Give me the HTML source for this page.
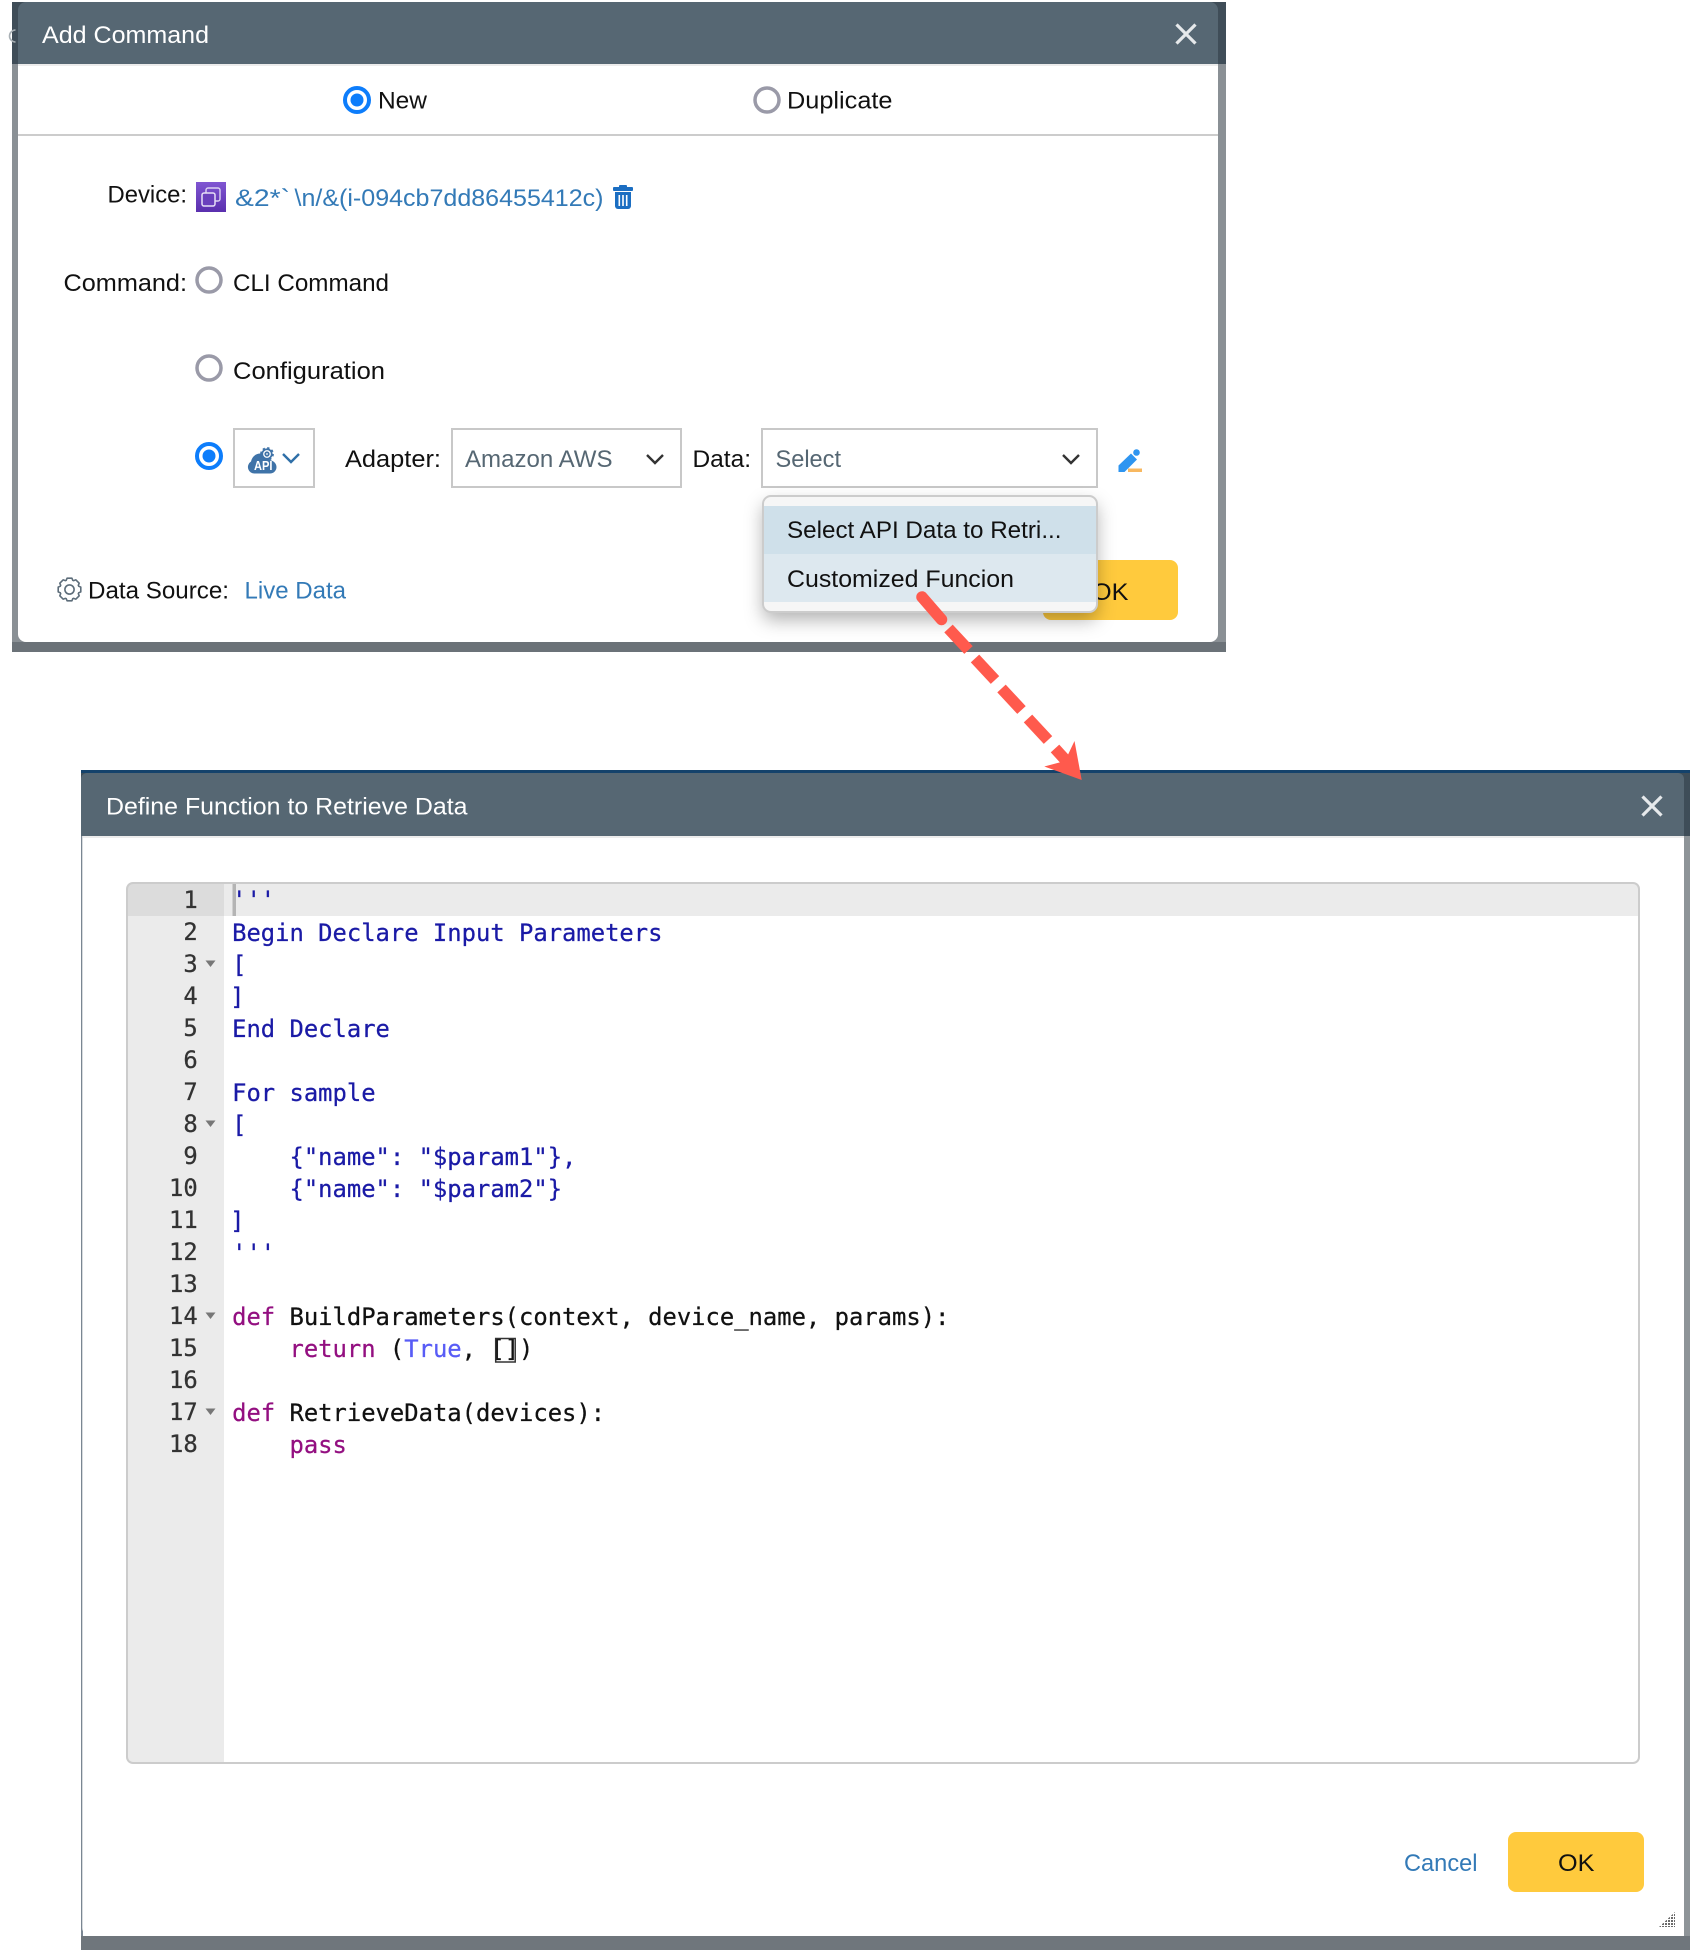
<!DOCTYPE html>
<html lang="en">
<head>
<meta charset="utf-8">
<title>Add Command / Define Function to Retrieve Data</title>
<style>
html,body{margin:0;padding:0;background:#fff;width:1690px;height:1950px;overflow:hidden}
svg{display:block}
text{font-family:"Liberation Sans",sans-serif;font-size:24.5px;fill:#111}
.t{fill:#fff}
.l{fill:#337ab7}
.g{fill:#566773}
.m{font-family:"DejaVu Sans Mono","Liberation Mono",monospace;font-size:23.84px;white-space:pre;fill:#1a1aa6;stroke:#1a1aa6;stroke-width:.25px}
.n{fill:#333;stroke:#333;text-anchor:end}
.k{fill:#930f80;stroke:#930f80}
.c{fill:#585cf6;stroke:#585cf6}
.b{fill:#111;stroke:#111}
</style>
</head>
<body>
<svg xmlns="http://www.w3.org/2000/svg" width="1690" height="1950" viewBox="0 0 1690 1950">
<defs>
<filter id="sh" x="-20%" y="-30%" width="140%" height="170%"><feDropShadow dx="0" dy="8" stdDeviation="9" flood-color="#000" flood-opacity=".3"/></filter>
<linearGradient id="pur" x1="0" y1="0" x2="0" y2="1"><stop offset="0" stop-color="#8056d2"/><stop offset="1" stop-color="#5a2fae"/></linearGradient>
<pattern id="grip" width="3" height="3" patternUnits="userSpaceOnUse"><rect width="2" height="2" fill="#6a6a6a"/></pattern>
<clipPath id="ed"><rect x="127" y="883" width="1512" height="880" rx="6"/></clipPath>
</defs>

<!-- first dialog backdrop -->
<rect x="12" y="2" width="1214" height="62" fill="#3f4d58"/>
<rect x="12" y="64" width="1214" height="578" fill="#8a9095"/>
<rect x="12" y="642" width="1214" height="10" fill="#6b7278"/>
<path d="M15.500 30a6 6 0 0 0 0 12" fill="none" stroke="#a9b0b5" stroke-width="1.6"/>
<rect x="18" y="20" width="1200" height="622" rx="8" fill="#fff"/>
<path d="M18 64V10a8 8 0 0 1 8-8H1210a8 8 0 0 1 8 8V64Z" fill="#566773"/>
<rect x="18" y="64" width="1200" height="2" fill="#ececec"/>
<rect x="18" y="134" width="1200" height="2" fill="#cccccc"/>
<text class="t" x="42" y="43" textLength="167" lengthAdjust="spacingAndGlyphs">Add Command</text>
<path d="M1176.500 24.500l19 19M1195.500 24.500l-19 19" stroke="#e6e9eb" stroke-width="3.2" fill="none"/>

<circle cx="357" cy="100" r="12" fill="#fff" stroke="#0d7dfb" stroke-width="4"/><circle cx="357" cy="100" r="6.500" fill="#0d7dfb"/>
<text x="378" y="108.500" textLength="49" lengthAdjust="spacingAndGlyphs">New</text>
<circle cx="767" cy="100" r="12" fill="#fff" stroke="#9a9aa8" stroke-width="3.500"/>
<text x="787" y="108.500" textLength="105.500" lengthAdjust="spacingAndGlyphs">Duplicate</text>

<text x="107.500" y="202.500" textLength="79.500" lengthAdjust="spacingAndGlyphs">Device:</text>
<rect x="196" y="182" width="30" height="30" fill="url(#pur)"/>
<rect x="206" y="188" width="14" height="13" rx="2" fill="none" stroke="#dcd2f2" stroke-width="1.400"/>
<rect x="202" y="193" width="13" height="13" rx="2" fill="#6a40bd" stroke="#e6dff6" stroke-width="1.500"/>
<text class="l" x="235" y="206" textLength="55" lengthAdjust="spacingAndGlyphs">&amp;2*`</text>
<text class="l" x="294.500" y="206" textLength="309" lengthAdjust="spacingAndGlyphs">\n/&amp;(i-094cb7dd86455412c)</text>
<g fill="#1b6ec2"><rect x="619" y="185" width="8" height="4" rx="1"/><rect x="613" y="187" width="20" height="4" rx="1"/><path d="M615 192H631V206a3 3 0 0 1-3 3H618a3 3 0 0 1-3-3Z"/></g>
<g fill="#fff"><rect x="618.500" y="195" width="1.600" height="11"/><rect x="622.200" y="195" width="1.600" height="11"/><rect x="625.900" y="195" width="1.600" height="11"/></g>

<text x="63.500" y="291" textLength="123.500" lengthAdjust="spacingAndGlyphs">Command:</text>
<circle cx="209" cy="280" r="12" fill="#fff" stroke="#9a9aa8" stroke-width="3.500"/>
<text x="233" y="291" textLength="156" lengthAdjust="spacingAndGlyphs">CLI Command</text>
<circle cx="209" cy="368" r="12" fill="#fff" stroke="#9a9aa8" stroke-width="3.500"/>
<text x="233" y="379" textLength="152" lengthAdjust="spacingAndGlyphs">Configuration</text>
<circle cx="209" cy="456" r="12" fill="#fff" stroke="#0d7dfb" stroke-width="4"/><circle cx="209" cy="456" r="6.500" fill="#0d7dfb"/>

<rect x="234" y="429" width="80" height="58" fill="#fff" stroke="#c8c8c8" stroke-width="2"/>
<path d="M255 473.500a6.500 6.500 0 0 1-4-12c1-5 5-8 9.500-8 4.500 0 8 3 9 6.500 4 .5 7 3.500 7 7a6.500 6.500 0 0 1-6.500 6.500Z" fill="#3f73a8"/>
<g transform="translate(267 454) scale(.5)" fill="#fff" stroke="#3f73a8" stroke-width="3.400">
<circle r="9.500"/><circle r="3.500"/>
<circle r="11.500" fill="none" stroke-width="4.500" stroke-dasharray="4.500 4.530"/>
</g>
<text x="254" y="470" textLength="18.500" lengthAdjust="spacingAndGlyphs" style="font-size:12.500px;font-weight:bold;fill:#fff">API</text>
<path d="M283 454l8 8 8-8" fill="none" stroke="#2f6fa8" stroke-width="2.400"/>

<text x="345" y="467" textLength="96" lengthAdjust="spacingAndGlyphs">Adapter:</text>
<rect x="452" y="429" width="229" height="58" fill="#fff" stroke="#c8c8c8" stroke-width="2"/>
<text class="g" x="465" y="467" textLength="147.500" lengthAdjust="spacingAndGlyphs">Amazon AWS</text>
<path d="M647 455l8 8 8-8" fill="none" stroke="#333" stroke-width="2.400"/>
<text x="692.500" y="467" textLength="58.500" lengthAdjust="spacingAndGlyphs">Data:</text>
<rect x="762" y="429" width="335" height="58" fill="#fff" stroke="#c8c8c8" stroke-width="2"/>
<text class="g" x="775.500" y="467" textLength="65.500" lengthAdjust="spacingAndGlyphs">Select</text>
<path d="M1063 455l8 8 8-8" fill="none" stroke="#333" stroke-width="2.400"/>

<path d="M1118.500 472V465.500L1131 453.500l6 6-12.500 12.500Z" fill="#2e95f0"/>
<circle cx="1136.500" cy="452.500" r="3.300" fill="#2e95f0"/>
<rect x="1128" y="468.500" width="14" height="3.500" fill="#f8b860"/>

<g fill="none" stroke="#5d6d7a" stroke-width="1.600" stroke-linejoin="round" transform="translate(69.500 589.500)">
<circle r="4.600"/>
<path d="M-3.560-8.590L-2.400-11.300L2.400-11.300L3.560-8.590"/>
<path d="M-3.560-8.590L-2.400-11.300L2.400-11.300L3.560-8.590" transform="rotate(45)"/>
<path d="M-3.560-8.590L-2.400-11.300L2.400-11.300L3.560-8.590" transform="rotate(90)"/>
<path d="M-3.560-8.590L-2.400-11.300L2.400-11.300L3.560-8.590" transform="rotate(135)"/>
<path d="M-3.560-8.590L-2.400-11.300L2.400-11.300L3.560-8.590" transform="rotate(180)"/>
<path d="M-3.560-8.590L-2.400-11.300L2.400-11.300L3.560-8.590" transform="rotate(225)"/>
<path d="M-3.560-8.590L-2.400-11.300L2.400-11.300L3.560-8.590" transform="rotate(270)"/>
<path d="M-3.560-8.590L-2.400-11.300L2.400-11.300L3.560-8.590" transform="rotate(315)"/>
</g>
<text x="88" y="598.500" textLength="141" lengthAdjust="spacingAndGlyphs">Data Source:</text>
<text class="l" x="244.500" y="598.500" textLength="101.500" lengthAdjust="spacingAndGlyphs">Live Data</text>

<rect x="1043" y="560" width="135" height="60" rx="8" fill="#ffca3d"/>
<text x="1092" y="600" textLength="36.500" lengthAdjust="spacingAndGlyphs">OK</text>

<!-- dropdown -->
<rect x="763" y="496" width="334" height="116" rx="8" fill="#f6f6f6" filter="url(#sh)"/>
<rect x="763" y="506" width="334" height="48" fill="#cfe0ea"/>
<rect x="763" y="554" width="334" height="48" fill="#dde8ef"/>
<rect x="763" y="496" width="334" height="116" rx="8" fill="none" stroke="#cccccc" stroke-width="2"/>
<text x="787" y="538" textLength="274.500" lengthAdjust="spacingAndGlyphs">Select API Data to Retri...</text>
<text x="787" y="587" textLength="227" lengthAdjust="spacingAndGlyphs">Customized Funcion</text>

<!-- second dialog backdrop -->
<rect x="81" y="770" width="1609" height="3" fill="#14426b"/>
<rect x="81" y="773" width="1609" height="63" fill="#3e4d58"/>
<rect x="1684" y="836" width="6" height="1100" fill="#8e9498"/>
<rect x="81" y="836" width="2" height="1100" fill="#7a8692"/>
<rect x="81" y="1936" width="1609" height="14" fill="#6f767c"/>
<rect x="82.300" y="790" width="1601.700" height="1146" rx="8" fill="#fff"/>
<path d="M81 836V779a6 6 0 0 1 6-6H1678a6 6 0 0 1 6 6V836Z" fill="#566773"/>
<rect x="82.300" y="836" width="1601.700" height="2" fill="#ececec"/>
<text class="t" x="106" y="814.500" textLength="361.500" lengthAdjust="spacingAndGlyphs">Define Function to Retrieve Data</text>
<path d="M1642.500 796.500l19 19M1661.500 796.500l-19 19" stroke="#e6e9eb" stroke-width="3.200" fill="none"/>

<!-- editor -->
<g clip-path="url(#ed)">
<rect x="127" y="883" width="1512" height="880" fill="#fff"/>
<rect x="127" y="883" width="97" height="880" fill="#ebebeb"/>
<rect x="224" y="883" width="1415" height="33" fill="#ebebeb"/>
<rect x="127" y="883" width="97" height="33" fill="#dcdcdc"/>
</g>
<rect x="232.500" y="884" width="3.500" height="32" fill="#b4b4b4"/>
<rect x="127" y="883" width="1512" height="880" rx="6" fill="none" stroke="#cccccc" stroke-width="2"/>

<text class="m n" x="197.700" y="908">1</text>
<text class="m n" x="197.700" y="940">2</text>
<text class="m n" x="197.700" y="972">3</text>
<text class="m n" x="197.700" y="1004">4</text>
<text class="m n" x="197.700" y="1036">5</text>
<text class="m n" x="197.700" y="1068">6</text>
<text class="m n" x="197.700" y="1100">7</text>
<text class="m n" x="197.700" y="1132">8</text>
<text class="m n" x="197.700" y="1164">9</text>
<text class="m n" x="197.700" y="1196">10</text>
<text class="m n" x="197.700" y="1228">11</text>
<text class="m n" x="197.700" y="1260">12</text>
<text class="m n" x="197.700" y="1292">13</text>
<text class="m n" x="197.700" y="1324">14</text>
<text class="m n" x="197.700" y="1356">15</text>
<text class="m n" x="197.700" y="1388">16</text>
<text class="m n" x="197.700" y="1420">17</text>
<text class="m n" x="197.700" y="1452">18</text>

<g fill="#777">
<path d="M205.500 960.500h10l-5 6.500Z"/>
<path d="M205.500 1120.500h10l-5 6.500Z"/>
<path d="M205.500 1312.500h10l-5 6.500Z"/>
<path d="M205.500 1408.500h10l-5 6.500Z"/>
</g>

<g transform="translate(-.5 .8)">
<text class="m" x="232.600" y="907.200">'''</text>
<text class="m" x="232.600" y="940">Begin Declare Input Parameters</text>
<text class="m" x="232.600" y="972">[</text>
<text class="m" x="230.600" y="1004">]</text>
<text class="m" x="232.600" y="1036">End Declare</text>
<text class="m" x="232.600" y="1100">For sample</text>
<text class="m" x="232.600" y="1132">[</text>
<text class="m" x="232.600" y="1164">    {"name": "$param1"},</text>
<text class="m" x="232.600" y="1196">    {"name": "$param2"}</text>
<text class="m" x="230.600" y="1228">]</text>
<text class="m" x="232.600" y="1260">'''</text>
<text class="m b" x="232.600" y="1324"><tspan class="k">def</tspan> BuildParameters(context, device_name, params):</text>
<text class="m b" x="232.600" y="1356">    <tspan class="k">return</tspan> (<tspan class="c">True</tspan>, [])</text>
<text class="m b" x="232.600" y="1420"><tspan class="k">def</tspan> RetrieveData(devices):</text>
<text class="m k" x="232.600" y="1452">    pass</text>
</g>
<rect x="495.700" y="1338.500" width="19.500" height="23.500" fill="none" stroke="#333" stroke-width="1.500"/>

<text class="l" x="1404" y="1871" textLength="73.500" lengthAdjust="spacingAndGlyphs">Cancel</text>
<rect x="1508" y="1832" width="136" height="60" rx="8" fill="#ffca3d"/>
<text x="1558" y="1871" textLength="36.500" lengthAdjust="spacingAndGlyphs">OK</text>
<path d="M1675 1912V1927H1659Z" fill="url(#grip)"/>

<!-- arrow -->
<g stroke="#ff5a4d" stroke-width="11.500" fill="none">
<path d="M922 597L941.500 619.500" stroke-linecap="round"/>
<path d="M948.500 628.500L968.500 650"/>
<path d="M975 658.500L995 680"/>
<path d="M1001.500 688.500L1021.500 710"/>
<path d="M1028 718.500L1048 740"/>
<path d="M1055 748.500L1070 765"/>
</g>
<path d="M1074.500 741L1081.700 780 1044.300 766.500 1065 761Z" fill="#ff5a4d"/>
</svg>
</body>
</html>
